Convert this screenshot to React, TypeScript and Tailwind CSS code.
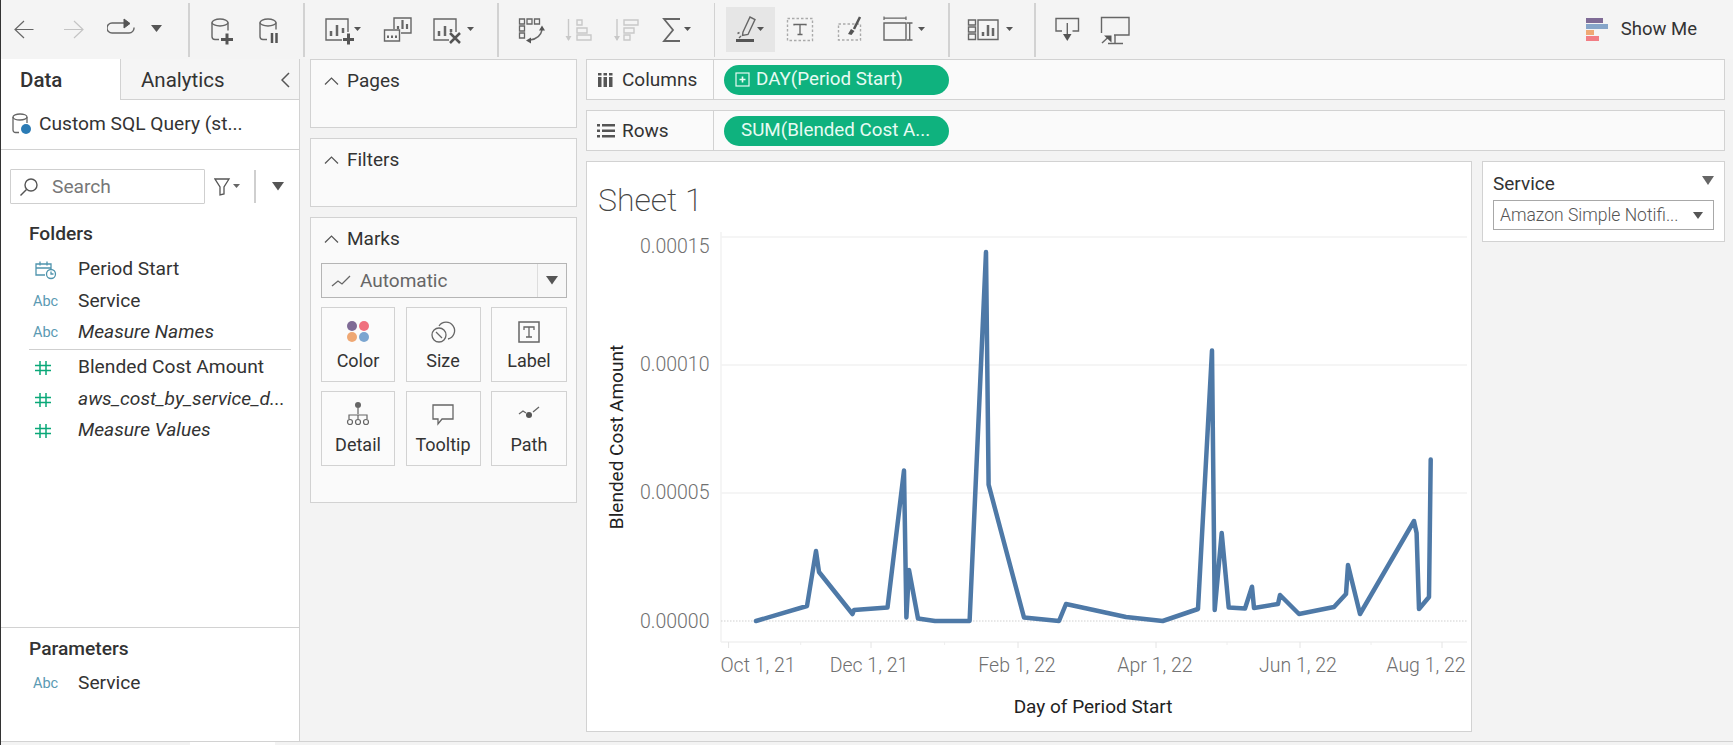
import React from "react";

const FONT = "font-['Roboto','Liberation_Sans',sans-serif]";

const linePoints = [
  [756, 621], [807, 606], [816, 551], [819, 572], [852.5, 614], [854, 610], [887.5, 607.5], [904, 470.5],
  [906.4, 617.5], [909, 570], [918, 618.5], [935, 621], [969.6, 621], [986, 252], [988.6, 484.6], [1024, 617.5],
  [1059, 621], [1066, 604], [1126, 617], [1162.7, 621], [1198, 609], [1212, 350.6], [1214.7, 610], [1221.7, 533],
  [1228.7, 607.5], [1245, 608.5], [1252, 586.7], [1254, 608], [1278, 604], [1280, 595], [1299, 614], [1334, 607],
  [1346, 594], [1348, 565], [1360, 614], [1414, 521], [1416.6, 533], [1419, 609], [1429, 597], [1430.7, 459.5],
].map((p) => p.join(",")).join(" ");

function Caret({ className = "", size = 10 }: { className?: string; size?: number }) {
  return (
    <svg className={className} width={size} height={size * 0.7} viewBox="0 0 10 7">
      <path d="M0 0h10L5 7z" fill="#555" />
    </svg>
  );
}

function Sep({ className = "" }: { className?: string }) {
  return <div className={"w-[1.5px] h-[54px] bg-[#d2d2d2] shrink-0 " + className} />;
}

// toolbar icons are drawn in page coordinates, viewBox starts at x0
function T({ x0, w, ml, children }: { x0: number; w: number; ml: string; children: React.ReactNode }) {
  return (
    <svg className={ml + " shrink-0"} width={w} height={59} viewBox={`${x0} 0 ${w} 59`} fill="none" stroke="#666" strokeWidth="1.4">
      {children}
    </svg>
  );
}

function Toolbar() {
  return (
    <div className="flex items-center h-[59px] bg-[#f4f4f4] shrink-0">
      <T x0={14} w={20} ml="ml-[13px]"><path d="M33.500 29.500H15M24 21l-9 8.500 9 8.500" strokeWidth="1.200" /></T>
      <T x0={64} w={20} ml="ml-[30px]"><path d="M64 29.500h19M74 21l9 8.500-9 8.500" stroke="#c4c4c4" strokeWidth="1.200" /></T>
      <T x0={107} w={28} ml="ml-[23px]">
        <path d="M125 23h-13a5 5 0 0 0 0 10h17a5 5 0 0 0 5-5.500" />
        <path d="M124 19l6 4.500-6 4.500z" fill="#555" stroke="#555" strokeWidth="1" />
      </T>
      <T x0={151} w={11} ml="ml-[16px]"><path d="M151 25h11l-5.500 7z" fill="#555" stroke="none" /></T>
      <Sep className="ml-[26px]" />
      <T x0={211} w={23} ml="ml-[21.5px]">
        <ellipse cx="220" cy="22.500" rx="8" ry="3.500" />
        <path d="M212 22.500v14a3 3 0 0 0 3 3h4M228 22.500v8" />
        <path d="M227 33.500v11M221 39.500h12" stroke="#555" strokeWidth="3" />
      </T>
      <T x0={259} w={20} ml="ml-[25px]">
        <ellipse cx="268" cy="22.500" rx="8" ry="3.500" />
        <path d="M260 22.500v14a3 3 0 0 0 3 3h4M276 22.500v7" />
        <path d="M272 33v10M276.500 33v10" stroke="#555" strokeWidth="2.500" />
      </T>
      <Sep className="ml-[24px]" />
      <T x0={325} w={36} ml="ml-[20.5px]">
        <path d="M342 40h-16V19h22v13" />
        <path d="M331 31v5M337 25v11M343 28v5" strokeWidth="2.500" />
        <path d="M348.500 33.500v11M343 39.500h11" stroke="#555" strokeWidth="3" />
        <path d="M354 27h7l-3.500 4z" fill="#555" stroke="none" />
      </T>
      <T x0={383} w={29} ml="ml-[22px]">
        <path d="M394 29V18h17v15h-10" />
        <path d="M398 29v-3M402.500 29v-9M407 29v-5" strokeWidth="2.200" />
        <path d="M384.500 30h15v11h-15z" />
        <path d="M388 35.500v2.500M392 35.500v2.500M396 35.500v2.500" strokeWidth="2" />
      </T>
      <T x0={433} w={42} ml="ml-[21px]">
        <path d="M449 40h-15V19h22v13" />
        <path d="M439 31v5M445 26v10M451 29v3" strokeWidth="2.500" />
        <path d="M450 33l10 10M460 33l-10 10" stroke="#555" strokeWidth="2.500" />
        <path d="M467 27h7l-3.500 4z" fill="#555" stroke="none" />
      </T>
      <Sep className="ml-[22px]" />
      <T x0={518} w={27} ml="ml-[19.5px]">
        <path d="M519.500 19h5v5h-5zM527 19h5v5h-5zM534.500 19h5v5h-5zM519.500 26h5v5h-5zM519.500 33h5v5h-5z" strokeWidth="1.300" />
        <path d="M542 30c-1 5-5 9-12 10" />
        <path d="M542 25.500l3 5h-6zM526 40.500l5-3v6z" fill="#555" stroke="none" />
      </T>
      <T x0={565} w={27} ml="ml-[20px]">
        <g stroke="#c8c8c8">
          <path d="M568.500 19v21" />
          <path d="M565.500 36h6l-3 5z" fill="#c8c8c8" stroke="none" />
          <path d="M577 20h5v5h-5zM577 28h10v5h-10zM577 35h14v5h-14z" />
        </g>
      </T>
      <T x0={613} w={26} ml="ml-[21px]">
        <g stroke="#c8c8c8">
          <path d="M617 19v21" />
          <path d="M614 36h6l-3 5z" fill="#c8c8c8" stroke="none" />
          <path d="M624 20h14v5h-14zM624 28h10v5h-10zM624 35h6v5h-6z" />
        </g>
      </T>
      <T x0={662} w={30} ml="ml-[23px]">
        <path d="M680 19h-16l9 11-9 11h16" strokeWidth="1.800" />
        <path d="M684 27h7l-3.500 4z" fill="#555" stroke="none" />
      </T>
      <Sep className="ml-[21.5px]" />
      <div className="ml-[11px] w-[49px] h-[45px] bg-[#e6e6e6] flex shrink-0">
        <svg width={49} height={45} viewBox="726 7 49 45" fill="none" stroke="#666" strokeWidth="1.400">
          <path d="M743 32l7-15 5 2.500-7 15-5.500 1z" />
          <path d="M741 36l-2 2M739.500 32.500l-2 1" />
          <path d="M736 40.500h18" stroke="#555" strokeWidth="3" />
          <path d="M757 27h7l-3.500 4z" fill="#555" stroke="none" />
        </svg>
      </div>
      <T x0={786} w={28} ml="ml-[11px]">
        <rect x="787.500" y="18.500" width="25" height="22" strokeDasharray="2.500 2" stroke="#aaa" />
        <path d="M794 25.500v-1h12v1M800 24.500v10M797.500 34.500h5" strokeWidth="1.300" />
      </T>
      <T x0={837} w={25} ml="ml-[23px]">
        <rect x="838.500" y="24" width="22" height="16" strokeDasharray="2.500 2" stroke="#aaa" />
        <path d="M860 17l-6 12" strokeWidth="2.500" stroke="#555" />
        <path d="M848 34l3-5 3.500 2-3 4z" fill="#555" stroke="none" />
      </T>
      <T x0={882} w={44} ml="ml-[20px]">
        <path d="M884 23h22v17h-22z" />
        <path d="M884 16.500v3.500M906 16.500v3.500M884 18.200h22" strokeWidth="1.200" />
        <path d="M907 23h5.500M907 40h5.500M909.700 23v17" strokeWidth="1.300" />
        <path d="M918 27h7l-3.500 4z" fill="#555" stroke="none" />
      </T>
      <Sep className="ml-[22px]" />
      <T x0={967} w={47} ml="ml-[17.5px]">
        <path d="M968.500 20h7v5h-7zM968.500 27h7v5h-7zM968.500 34h7v5.500h-7z" />
        <path d="M978 20h20v19.500h-20z" />
        <path d="M983 36v-4M988 36V25M993 36v-8" strokeWidth="2.500" />
        <path d="M1006 27h7l-3.500 4z" fill="#555" stroke="none" />
      </T>
      <Sep className="ml-[20px]" />
      <T x0={1055} w={25} ml="ml-[19.5px]">
        <path d="M1062 31h-6V18.500h22.500V31h-6" />
        <path d="M1067.300 23v13" />
        <path d="M1063 34h8.500l-4.200 7z" fill="#555" stroke="none" />
      </T>
      <T x0={1100} w={31} ml="ml-[20px]">
        <path d="M1101.500 33V17.500h27.500V35h-15" />
        <path d="M1115 35v8M1108 43.500h15" />
        <path d="M1102 43l6.500-6" />
        <path d="M1104 35.500h7.500v7z" fill="#555" stroke="none" />
      </T>
      <div className="ml-auto mr-[36px] flex items-center">
        <svg width={23} height={24} viewBox="0 0 23 24" className="mr-[12px]">
          <rect x="0" y="0" width="17" height="5" fill="#7f6b96" />
          <rect x="0" y="6" width="22" height="5" fill="#86a5c9" />
          <rect x="0" y="12" width="8" height="5" fill="#efa874" />
          <rect x="0" y="18" width="13" height="5" fill="#f27d84" />
        </svg>
        <span className="text-[18.500px] text-[#333] pt-[1px]">Show Me</span>
      </div>
    </div>
  );
}

function Hash() {
  return (
    <svg width="16" height="16" viewBox="0 0 16 16" className="ml-[6px] mr-[27px] shrink-0" fill="none" stroke="#0aa878" strokeWidth="1.500">
      <path d="M5 1v14M11 1v14M0 5.500h16M0 10.500h16" />
    </svg>
  );
}

function Abc() {
  return <span className="w-[49px] shrink-0 text-[14.500px] pl-[4px] text-[#5b9ab3] not-italic">Abc</span>;
}

function DataPane() {
  return (
    <div className="w-[299px] shrink-0 bg-white border-r-[1px] border-[#d2d2d2] flex flex-col text-[#333]">
      <div className="flex h-[41px] shrink-0">
        <div className="w-[119px] flex items-center pl-[19px] pt-[1px] text-[20.500px] font-medium">Data</div>
        <div className="flex-1 flex items-center pl-[20px] pt-[2px] text-[20.500px] bg-[#f5f5f5] border-l border-b border-[#d2d2d2]">
          Analytics
          <svg className="ml-auto mr-[9px]" width="9" height="16" viewBox="0 0 9 16" fill="none" stroke="#555" strokeWidth="1.500"><path d="M8 1L1 8l7 7" /></svg>
        </div>
      </div>
      <div className="h-[50px] shrink-0 border-b border-[#d2d2d2] flex pt-[13px] pl-[11px] items-start">
        <svg width="20" height="21" viewBox="0 0 20 21" fill="none" stroke="#666" strokeWidth="1.300" className="mr-[7px]">
          <ellipse cx="8" cy="4" rx="7" ry="3" />
          <path d="M1 4v13a2.500 2.500 0 0 0 2.500 2.500H7M15 4v6" />
          <circle cx="14" cy="16" r="5" fill="#2b7bb5" stroke="none" />
        </svg>
        <span className="text-[19.200px] leading-[21px] whitespace-nowrap">Custom SQL Query (st...</span>
      </div>
      <div className="flex items-center mt-[19px] ml-[9px] shrink-0">
        <div className="w-[195px] h-[35px] border border-[#cfcfcf] flex items-center pl-[8px] rounded-[1px]">
          <svg width="20" height="20" viewBox="0 0 20 20" fill="none" stroke="#555" strokeWidth="1.400">
            <circle cx="12" cy="8" r="6" />
            <path d="M7.500 12.500L1.500 18.500" />
          </svg>
          <span className="ml-[13px] pt-[1px] text-[19.200px] text-[#777]">Search</span>
        </div>
        <svg className="ml-[9px]" width="26" height="20" viewBox="0 0 26 20" fill="none" stroke="#555" strokeWidth="1.300">
          <path d="M1 2h14L10 10v7l-4 1v-8z" />
          <path d="M19 7h7l-3.500 4z" fill="#666" stroke="none" />
        </svg>
        <div className="w-[1.500px] h-[33px] bg-[#cfcfcf] ml-[14px]" />
        <Caret className="ml-[16px]" size={12} />
      </div>
      <div className="ml-[28px] mt-[18px] h-[24px] leading-[24px] text-[19.200px] font-medium">Folders</div>
      <div className="ml-[28px] mt-[7px] text-[19.200px] mr-[8px]">
        <div className="flex items-center h-[33px]">
          <svg width="22" height="20" viewBox="0 0 22 20" className="ml-[6px] mr-[21px] shrink-0" fill="none" stroke="#4f94ad" strokeWidth="1.300">
            <path d="M10 15H1V4h15v5M1 8h15M5 1.500v4M12 1.500v4" />
            <circle cx="16" cy="14" r="4.500" />
            <path d="M16 11.500V14h2.500" />
          </svg>
          Period Start
        </div>
        <div className="flex items-center h-[31px]"><Abc />Service</div>
        <div className="flex items-center h-[31px] italic"><Abc />Measure Names</div>
        <div className="h-[1px] mt-[1px] bg-[#cfcfcf]" />
        <div className="flex items-center h-[34px] pt-[1px]"><Hash />Blended Cost Amount</div>
        <div className="flex items-center h-[31px] italic"><Hash /><span className="whitespace-nowrap">aws_cost_by_service_d...</span></div>
        <div className="flex items-center h-[31px] italic"><Hash />Measure Values</div>
      </div>
      <div className="mt-auto h-[114px] border-t border-[#d2d2d2] pl-[28px] shrink-0">
        <div className="mt-[9px] h-[24px] leading-[24px] text-[19.200px] font-medium">Parameters</div>
        <div className="flex items-center h-[31px] mt-[7px] text-[19.200px]"><Abc />Service</div>
      </div>
    </div>
  );
}

function CardHead({ label }: { label: string }) {
  return (
    <div className="flex items-center h-[42px] pl-[13px] text-[19px] text-[#333]">
      <svg width="15" height="8" viewBox="0 0 15 8" fill="none" stroke="#555" strokeWidth="1.200" className="mr-[8px]"><path d="M1 7.500L7.500 1 14 7.500" /></svg>
      {label}
    </div>
  );
}

function MarkBox({ label, children }: { label: string; children: React.ReactNode }) {
  return (
    <div className="h-[75px] border border-[#d2d2d2] bg-[#fbfbfb] flex flex-col items-center">
      <svg width="30" height="30" viewBox="0 0 30 30" className="mt-[9px]">{children}</svg>
      <span className="text-[18px] text-[#333] leading-[24px] mt-[2px]">{label}</span>
    </div>
  );
}

function MiddleColumn() {
  return (
    <div className="w-[267px] ml-[10px] shrink-0 flex flex-col gap-[10px]">
      <div className="h-[69px] border border-[#d2d2d2] bg-[#fafafa]"><CardHead label="Pages" /></div>
      <div className="h-[69px] border border-[#d2d2d2] bg-[#fafafa]"><CardHead label="Filters" /></div>
      <div className="h-[286px] border border-[#d2d2d2] bg-[#fafafa]">
        <CardHead label="Marks" />
        <div className="ml-[10px] mr-[9px] mt-[3px] h-[35px] border border-[#b5b5b5] bg-[#f7f7f7] flex items-center">
          <svg width="20" height="12" viewBox="0 0 20 12" fill="none" stroke="#666" strokeWidth="1.300" className="ml-[9px] mr-[9px]"><path d="M1 11l6-5 4 3 8-8" /></svg>
          <span className="text-[19px] text-[#666] pt-[1px]">Automatic</span>
          <div className="ml-auto w-[1px] h-[33px] bg-[#ddd]" />
          <Caret className="mx-[8px]" size={12} />
        </div>
        <div className="ml-[10px] mt-[9px] grid grid-cols-[74px_75px_76px] gap-x-[10.500px] gap-y-[9px]">
          <MarkBox label="Color">
            <circle cx="9" cy="9" r="5" fill="#7f6b96" />
            <circle cx="21" cy="9" r="5" fill="#f0707e" />
            <circle cx="9" cy="20" r="5" fill="#efa874" />
            <circle cx="21" cy="20" r="5" fill="#7ba5d0" />
          </MarkBox>
          <MarkBox label="Size">
            <g fill="none" stroke="#666" strokeWidth="1.300">
              <path d="M11 9a8.500 8.500 0 1 1 9 13" />
              <circle cx="11" cy="18" r="7" />
              <path d="M8 15l6 6" />
            </g>
          </MarkBox>
          <MarkBox label="Label">
            <rect x="5" y="5" width="20" height="20" fill="none" stroke="#666" strokeWidth="1.500" />
            <path d="M10 13v-3h10v3M15 10v10M12 20h6" fill="none" stroke="#666" strokeWidth="1.300" />
          </MarkBox>
          <MarkBox label="Detail">
            <circle cx="15" cy="4" r="3" fill="#666" />
            <g fill="none" stroke="#666" strokeWidth="1.200">
              <path d="M15 7v6M6 18v-4h18v4M15 14v4" />
              <circle cx="7" cy="21" r="2.500" />
              <circle cx="15" cy="21" r="2.500" />
              <circle cx="23" cy="21" r="2.500" />
            </g>
          </MarkBox>
          <MarkBox label="Tooltip">
            <path d="M5 4h20v14H14l-4 5v-5H5z" fill="none" stroke="#666" strokeWidth="1.300" />
          </MarkBox>
          <MarkBox label="Path">
            <path d="M5 13l4-3 3 2M19 11l6-5" fill="none" stroke="#666" strokeWidth="1.300" />
            <circle cx="15" cy="14" r="3" fill="#555" />
          </MarkBox>
        </div>
      </div>
    </div>
  );
}

function Shelf({ label, icon, pill, className = "" }: { label: string; icon: React.ReactNode; pill: React.ReactNode; className?: string }) {
  return (
    <div className={"h-[41px] border border-[#d2d2d2] bg-[#fafafa] flex items-center " + className}>
      <div className="w-[127px] h-full flex items-center border-r border-[#d2d2d2] text-[19px] text-[#333] shrink-0 pt-[1px]">
        {icon}
        {label}
      </div>
      <div className="ml-[10px] w-[225px] h-[30px] rounded-full bg-[#0fb27e] text-[18.800px] text-[#e8fbf3] flex items-center whitespace-nowrap">
        {pill}
      </div>
    </div>
  );
}

function Chart() {
  const grid = [237, 365, 493];
  const major = [728.600, 871, 1018, 1156, 1300, 1442];
  const minor = [800.700, 944.600, 1227, 1371];
  return (
    <svg width="884" height="499" viewBox="587 231 884 499" className="block">
      {grid.map((y) => <line key={y} x1="721" x2="1467" y1={y} y2={y} stroke="#f2f2f2" strokeWidth="1.500" />)}
      <line x1="721" x2="721" y1="232" y2="642" stroke="#f2f2f2" strokeWidth="1.500" />
      <line x1="721" x2="1467" y1="642" y2="642" stroke="#f0f0f0" strokeWidth="1.500" />
      <line x1="721" x2="1467" y1="621" y2="621" stroke="#cfcfcf" strokeWidth="1.200" strokeDasharray="1.500 1.500" />
      {major.map((x) => <line key={x} x1={x} x2={x} y1="642" y2="648" stroke="#e4e4e4" />)}
      {minor.map((x) => <line key={x} x1={x} x2={x} y1="642" y2="645" stroke="#eee" />)}
      <polyline points={linePoints} fill="none" stroke="#4e79a7" strokeWidth="4.500" strokeLinejoin="round" strokeLinecap="round" />
      <g fontSize="19.500" fill="#707070" fontWeight="300" textAnchor="end">
        <text x="709.500" y="253">0.00015</text>
        <text x="709.500" y="371">0.00010</text>
        <text x="709.500" y="499">0.00005</text>
        <text x="709.500" y="628">0.00000</text>
      </g>
      <g fontSize="19.500" fill="#707070" fontWeight="300" textAnchor="middle">
        <text x="758" y="672">Oct 1, 21</text>
        <text x="869" y="672">Dec 1, 21</text>
        <text x="1017" y="672">Feb 1, 22</text>
        <text x="1155" y="672">Apr 1, 22</text>
        <text x="1298" y="672">Jun 1, 22</text>
        <text x="1426" y="672">Aug 1, 22</text>
      </g>
      <text x="1093" y="713" fontSize="19" fill="#222" fontWeight="400" textAnchor="middle">Day of Period Start</text>
      <text transform="translate(623 437) rotate(-90)" fontSize="19" fill="#222" fontWeight="400" textAnchor="middle">Blended Cost Amount</text>
    </svg>
  );
}

function Workspace() {
  return (
    <div className="ml-[9px] w-[1139px] shrink-0 flex flex-col">
      <Shelf
        label="Columns"
        icon={
          <svg width="15" height="14" viewBox="0 0 15 14" className="ml-[11px] mr-[9px]" fill="#555">
            <rect x="0" y="0" width="3.500" height="2.500" /><rect x="0" y="4" width="3.500" height="10" />
            <rect x="5.500" y="0" width="3.500" height="2.500" /><rect x="5.500" y="4" width="3.500" height="10" />
            <rect x="11" y="0" width="3.500" height="2.500" /><rect x="11" y="4" width="3.500" height="10" />
          </svg>
        }
        pill={
          <>
            <svg width="15" height="15" viewBox="0 0 15 15" className="ml-[11px] mr-[6px]" fill="none" stroke="#e8fbf3" strokeWidth="1.200">
              <rect x="1" y="1" width="13" height="13" />
              <path d="M4.500 7.500h6M7.500 4.500v6" strokeWidth="1.600" />
            </svg>
            DAY(Period Start)
          </>
        }
      />
      <Shelf
        className="mt-[10px]"
        label="Rows"
        icon={
          <svg width="18" height="14" viewBox="0 0 18 14" className="ml-[10px] mr-[7px]" fill="#555">
            <rect x="0" y="0" width="3" height="2.500" /><rect x="5" y="0" width="13" height="2.500" />
            <rect x="0" y="5.500" width="3" height="2.500" /><rect x="5" y="5.500" width="13" height="2.500" />
            <rect x="0" y="11" width="3" height="2.500" /><rect x="5" y="11" width="13" height="2.500" />
          </svg>
        }
        pill={<span className="ml-[17px]">SUM(Blended Cost A...</span>}
      />
      <div className="flex mt-[10px]">
        <div className="w-[886px] h-[571px] border border-[#d2d2d2] bg-white shrink-0">
          <div className="h-[69px] pl-[11px] pt-[16px] text-[32px] leading-[44px] font-extralight text-[#444]">Sheet 1</div>
          <Chart />
        </div>
        <div className="ml-[10px] w-[243px] h-[81px] border border-[#d2d2d2] bg-white px-[10px] shrink-0">
          <div className="flex items-center h-[38px] text-[19px] text-[#333] pt-[6px]">
            Service
            <svg className="ml-auto -mt-[8px]" width="12" height="9" viewBox="0 0 12 9"><path d="M0 0h12L6 9z" fill="#666" /></svg>
          </div>
          <div className="h-[30px] w-[221px] border border-[#a8a8a8] flex items-center pl-[6px] text-[17.500px] font-light text-[#555] whitespace-nowrap">
            Amazon Simple Notifi...
            <Caret className="ml-auto mr-[10px]" size={10} />
          </div>
        </div>
      </div>
    </div>
  );
}

export default function App() {
  return (
    <div className={"w-[1733px] h-[745px] overflow-hidden bg-[#f3f3f3] border-l border-[#333] flex flex-col " + FONT}>
      <Toolbar />
      <div className="flex flex-1 min-h-0 border-b border-[#d2d2d2] h-[683px]">
        <DataPane />
        <MiddleColumn />
        <Workspace />
      </div>
      <div className="h-[3px] shrink-0 flex">
        <div className="ml-[189px] w-[85px] bg-white" />
      </div>
    </div>
  );
}
